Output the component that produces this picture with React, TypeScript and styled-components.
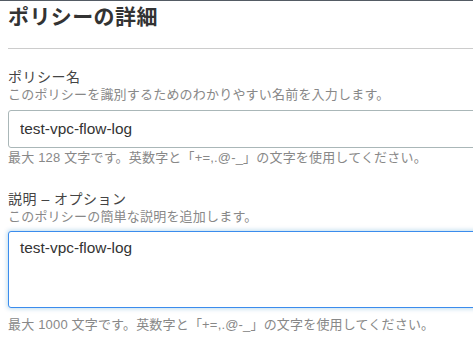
import React, { useEffect, useRef } from "react";
import styled, { createGlobalStyle } from "styled-components";

const Global = createGlobalStyle`
  html, body { margin: 0; padding: 0; background: #fff; overflow: hidden; }
  body { font-family: "Liberation Sans", Arial, "Noto Sans CJK JP", sans-serif; }
`;

const Page = styled.div`
  width: 473px;
  height: 346px;
  border-top: 1px solid #545b64;
  box-sizing: border-box;
  overflow: hidden;
`;

const Section = styled.div`
  width: 620px;
  padding-left: 8px;
`;

const Title = styled.h2`
  margin: 0;
  padding: 3px 0 0;
  height: 48px;
  box-sizing: border-box;
  font-size: 21px;
  font-weight: bold;
  letter-spacing: 0.4px;
  color: #333;
  line-height: 26px;
  border-bottom: 1px solid #ccc;
`;

const Field = styled.div<{ $top: number }>`
  display: flex;
  flex-direction: column;
  padding-top: ${(p) => p.$top}px;
`;

const Label = styled.label`
  font-size: 14px;
  letter-spacing: 0.5px;
  line-height: 18px;
  color: #444;
`;

const Desc = styled.div`
  font-size: 13px;
  letter-spacing: 0.2px;
  line-height: 18px;
  color: #888;
`;

const Input = styled.input`
  margin-top: 6px;
  height: 38px;
  box-sizing: border-box;
  border: 1px solid #aab7b8;
  border-radius: 3px;
  padding: 0 11px;
  font-family: inherit;
  font-size: 15.4px;
  color: #333;
  outline: none;
`;

const Area = styled.textarea`
  margin-top: 5px;
  height: 77px;
  box-sizing: border-box;
  border: 1px solid #3b8ced;
  border-radius: 3px;
  box-shadow: 0 0 4px 1px rgba(0, 115, 187, 0.25);
  padding: 7px 11px;
  font-family: inherit;
  font-size: 15.4px;
  line-height: 18px;
  color: #333;
  caret-color: #333;
  outline: none;
  resize: none;
`;

const Help = styled.div<{ $top: number }>`
  margin-top: ${(p) => p.$top}px;
  font-size: 13px;
  letter-spacing: 0.18px;
  line-height: 18px;
  color: #888;
`;

export default function App() {
  const areaRef = useRef<HTMLTextAreaElement>(null);
  useEffect(() => {
    const el = areaRef.current;
    if (el) {
      el.focus();
      const n = el.value.length;
      el.setSelectionRange(n, n);
    }
  }, []);
  return (
    <>
      <Global />
      <Page>
        <Section>
          <Title>ポリシーの詳細</Title>
          <Field $top={19}>
            <Label>ポリシー名</Label>
            <Desc>このポリシーを識別するためのわかりやすい名前を入力します。</Desc>
            <Input defaultValue="test-vpc-flow-log" />
            <Help $top={1}>最大 128 文字です。英数字と「+=,.@-_」の文字を使用してください。</Help>
          </Field>
          <Field $top={23}>
            <Label>説明 – オプション</Label>
            <Desc>このポリシーの簡単な説明を追加します。</Desc>
            <Area ref={areaRef} defaultValue="test-vpc-flow-log" />
            <Help $top={8}>最大 1000 文字です。英数字と「+=,.@-_」の文字を使用してください。</Help>
          </Field>
        </Section>
      </Page>
    </>
  );
}
